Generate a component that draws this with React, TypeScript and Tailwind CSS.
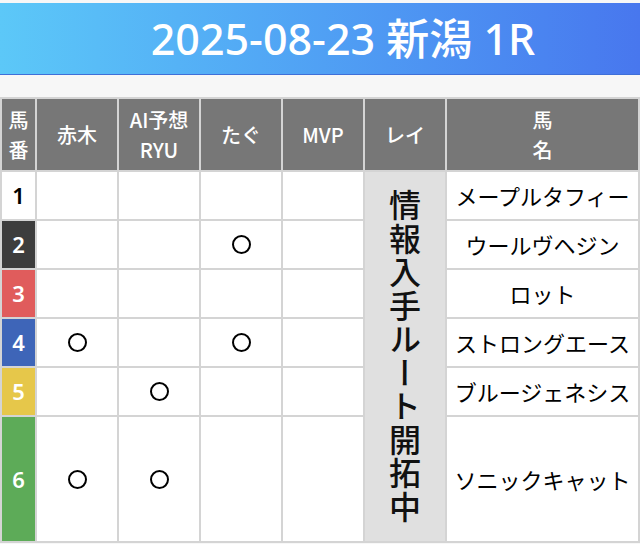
import React from "react";

const jp = { fontFamily: '"Noto Sans CJK JP", "Noto Sans", sans-serif' };

const rows = [
  { n: "1", bg: "bg-white", fg: "text-black", marks: [false, false, false, false], name: "メープルタフィー" },
  { n: "2", bg: "bg-[#3d3d3d]", fg: "text-white", marks: [false, false, true, false], name: "ウールヴヘジン" },
  { n: "3", bg: "bg-[#e05c5c]", fg: "text-white", marks: [false, false, false, false], name: "ロット" },
  { n: "4", bg: "bg-[#3e65b8]", fg: "text-white", marks: [true, false, true, false], name: "ストロングエース" },
  { n: "5", bg: "bg-[#e6c74a]", fg: "text-white", marks: [false, true, false, false], name: "ブルージェネシス" },
  { n: "6", bg: "bg-[#5dab58]", fg: "text-white", marks: [true, true, false, false], name: "ソニックキャット" },
];

const rowStarts = ["row-start-2", "row-start-3", "row-start-4", "row-start-5", "row-start-6", "row-start-7"];

const hdr = "bg-[#777] text-white text-[20px] font-medium flex items-center justify-center";

export default function App() {
  return (
    <div className="w-[640px] h-[544px] bg-[#f7f7f7] overflow-hidden" style={jp}>
      <div className="mt-[3px] h-[72px] bg-gradient-to-r from-[#5cc8f8] to-[#4877ee] flex items-center justify-center pl-[46px] border-b border-[#3f6fd8]">
        <span className="text-white text-[43px] font-medium leading-none" style={{ fontFamily: '"Noto Sans", "Noto Sans CJK JP", sans-serif' }}>
          2025-08-23 新潟 1R
        </span>
      </div>
      <div className="mt-[22px] grid grid-cols-[33px_80px_80px_80px_80px_80px_1fr] grid-rows-[71px_47px_47px_47px_47px_47px_124px] gap-[2px] p-[2px] bg-[#d4d4d4]">
        <div className={`${hdr} flex-col leading-[30px]`}>
          <span>馬</span>
          <span>番</span>
        </div>
        <div className={hdr}>赤木</div>
        <div className={`${hdr} flex-col leading-[30px]`}>
          <span>AI予想</span>
          <span>RYU</span>
        </div>
        <div className={hdr}>たぐ</div>
        <div className={hdr}>MVP</div>
        <div className={hdr}>レイ</div>
        <div className={`${hdr} flex-col leading-[30px]`}>
          <span>馬</span>
          <span>名</span>
        </div>

        {rows.map((r, i) => (
          <React.Fragment key={r.n}>
            <div className={`${r.bg} ${r.fg} ${rowStarts[i]} col-start-1 flex items-center justify-center text-[22px] font-semibold`} style={{ fontFamily: '"Noto Sans", sans-serif' }}>
              {r.n}
            </div>
            {r.marks.map((m, j) => (
              <div key={j} className={`bg-white ${rowStarts[i]} flex items-center justify-center`}>
                {m ? <div className="w-[19px] h-[19px] rounded-full border-[2.5px] border-black" /> : null}
              </div>
            ))}
            <div className={`bg-white ${rowStarts[i]} col-start-7 flex items-center justify-center text-[22px] text-black`}>
              {r.name}
            </div>
          </React.Fragment>
        ))}

        <div className="bg-[#e0e0e0] col-start-6 row-start-2 row-span-6 flex items-center justify-center">
          <span className="[writing-mode:vertical-rl] text-[32px] font-medium text-[#111] leading-none tracking-[1.5px]">
            情報入手ルート開拓中
          </span>
        </div>
      </div>
    </div>
  );
}
